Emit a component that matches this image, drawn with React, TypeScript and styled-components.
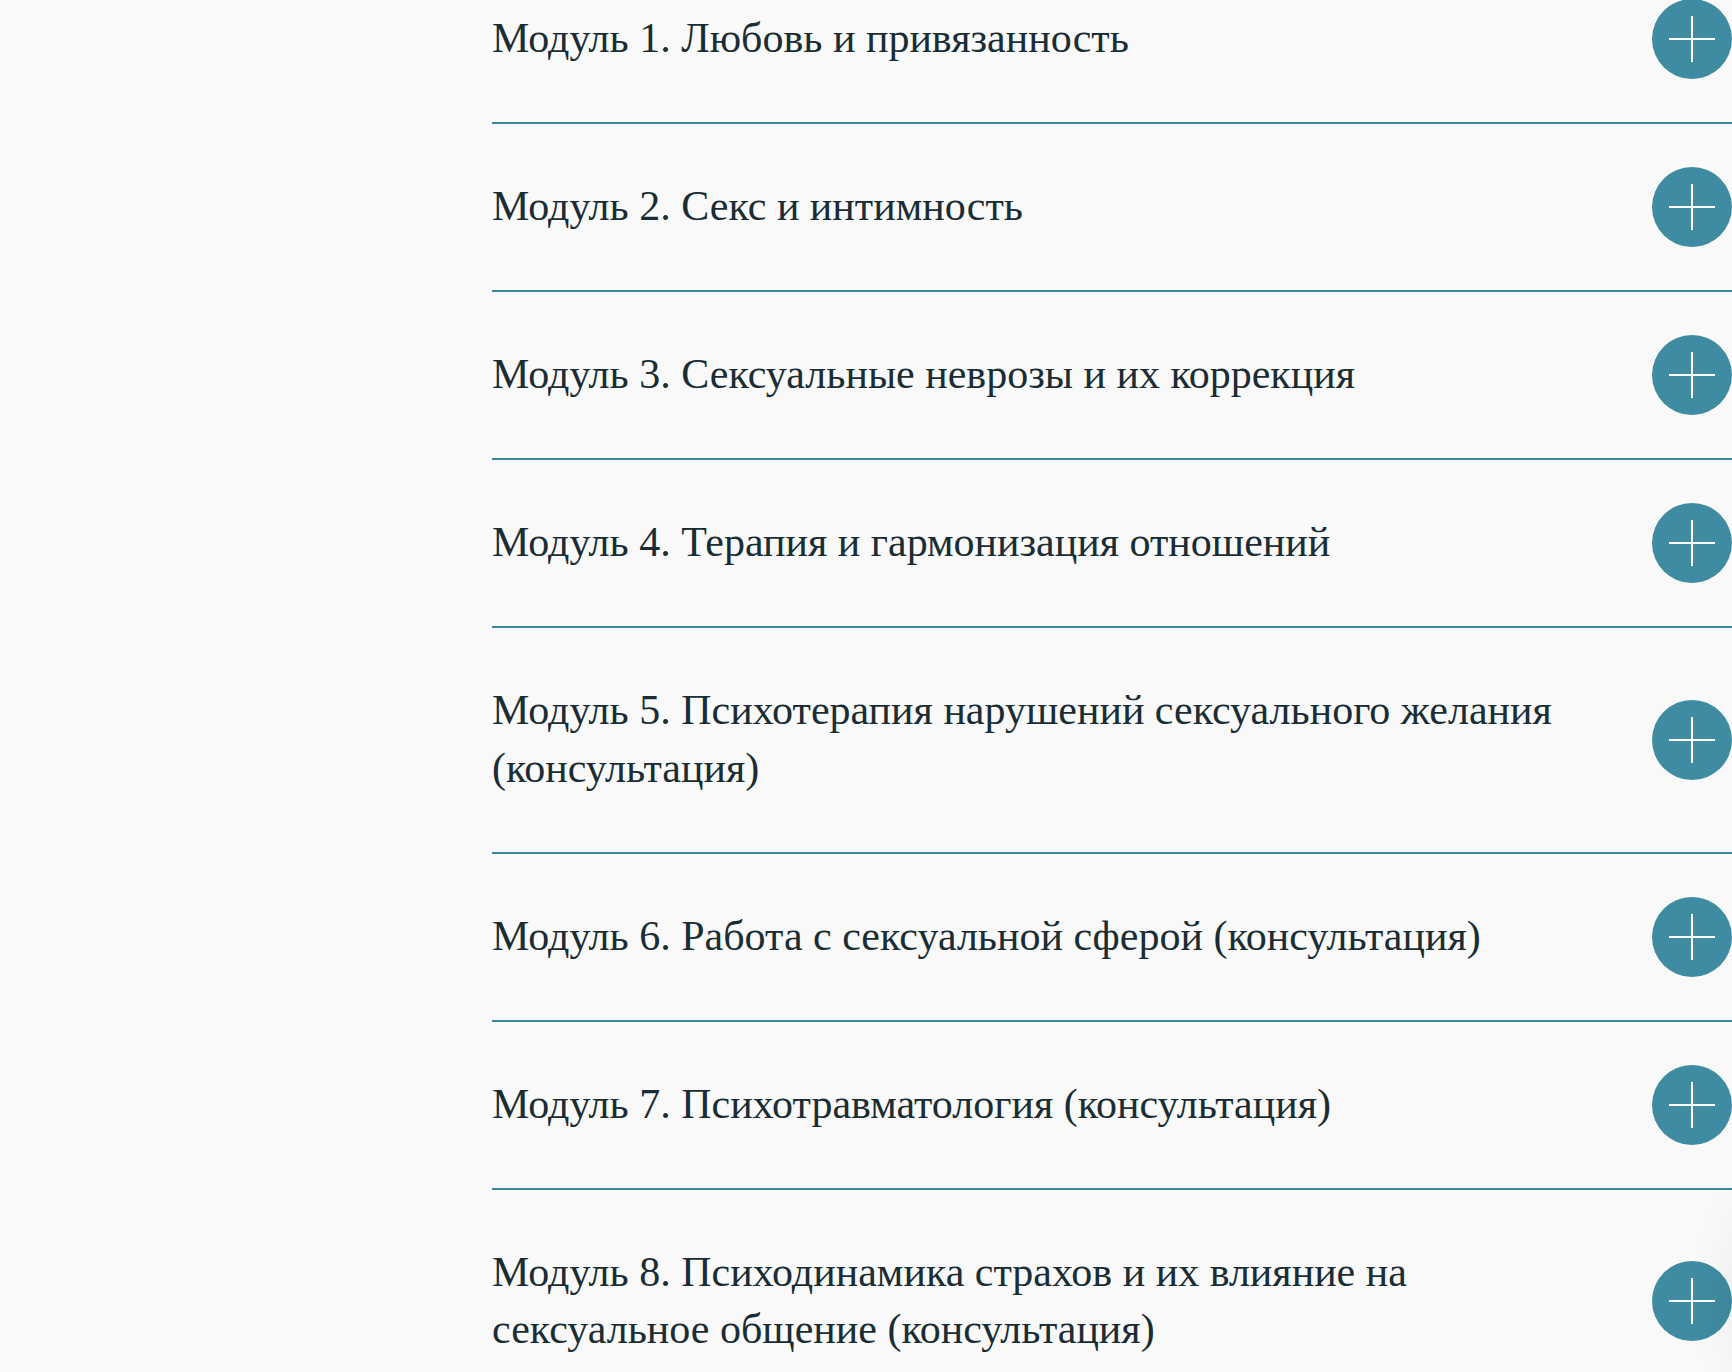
import * as React from "react";
import styled, { createGlobalStyle } from "styled-components";

const GlobalStyle = createGlobalStyle`
	html, body {
		margin: 0;
		padding: 0;
		background: #f9f9f9;
		overflow: hidden;
	}
`;

const Page = styled.div`
	display: grid;
	grid-template-columns: 492px 1fr;
	margin-top: -44px;
	font-family: "Liberation Serif", "DejaVu Serif", serif;
	color: #1a2d34;
`;

const ModuleList = styled.ul`
	grid-column: 2;
	list-style: none;
	margin: 0;
	padding: 0;
`;

const ModuleItem = styled.li`
	display: flex;
	align-items: center;
	justify-content: space-between;
	gap: 60px;
	border-bottom: 2px solid #3b889e;
`;

const ModuleTitle = styled.h3`
	flex: 1;
	margin: 0;
	padding: 54.25px 0;
	font-size: 42px;
	font-weight: 400;
	line-height: 57.5px;
`;

const ToggleButton = styled.button`
	flex: none;
	display: flex;
	align-items: center;
	justify-content: center;
	width: 80px;
	height: 80px;
	padding: 0;
	border: none;
	border-radius: 50%;
	background: #3f8ba1;
	cursor: pointer;
`;

const FloatingShade = styled.div`
	position: fixed;
	right: -96px;
	top: 1210px;
	width: 80px;
	height: 170px;
	border-radius: 40px;
	background: #f9f9f9;
	box-shadow: 0 0 60px rgba(0, 0, 0, 0.1);
`;

const modules = [
	"Модуль 1. Любовь и привязанность",
	"Модуль 2. Секс и интимность",
	"Модуль 3. Сексуальные неврозы и их коррекция",
	"Модуль 4. Терапия и гармонизация отношений",
	"Модуль 5. Психотерапия нарушений сексуального желания (консультация)",
	"Модуль 6. Работа с сексуальной сферой (консультация)",
	"Модуль 7. Психотравматология (консультация)",
	"Модуль 8. Психодинамика страхов и их влияние на сексуальное общение (консультация)",
];

function PlusIcon() {
	return (
		<svg width="46" height="46" viewBox="0 0 46 46" fill="none">
			<path d="M23 0V46M0 23H46" stroke="#fff" strokeWidth="2" />
		</svg>
	);
}

export default function App() {
	return (
		<>
			<GlobalStyle />
			<Page>
				<ModuleList>
					{modules.map((title) => (
						<ModuleItem key={title}>
							<ModuleTitle>{title}</ModuleTitle>
							<ToggleButton type="button" aria-label="Открыть">
								<PlusIcon />
							</ToggleButton>
						</ModuleItem>
					))}
				</ModuleList>
			</Page>
			<FloatingShade />
		</>
	);
}
